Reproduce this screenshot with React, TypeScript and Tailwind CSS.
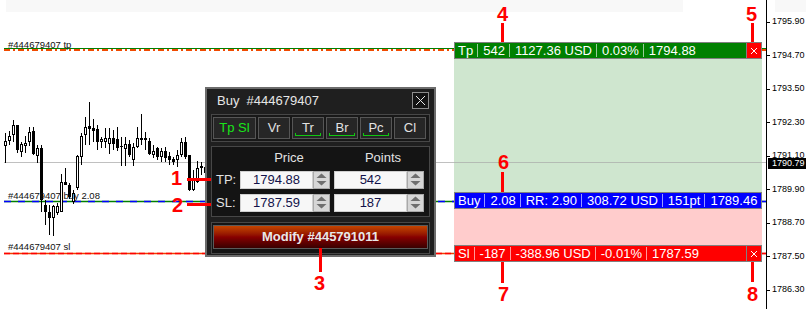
import React from "react";

type Candle = [number, number, number, number, number, number];

// x, high, low, bodyTop, bodyBottom, filled
const candles: Candle[] = [
  [5, 133, 163, 141, 146, 0],
  [9, 131, 145, 136, 141, 0],
  [13, 120, 142, 125, 135, 0],
  [17, 125, 153, 125, 150, 1],
  [21, 142, 157, 144, 152, 0],
  [25, 136, 153, 143, 146, 0],
  [29, 127, 146, 132, 142, 0],
  [33, 127, 155, 131, 154, 1],
  [37, 145, 163, 148, 156, 0],
  [41, 145, 212, 148, 200, 1],
  [45, 200, 225, 205, 212, 1],
  [49, 205, 235, 212, 218, 1],
  [53, 205, 236, 206, 218, 0],
  [57, 203, 215, 206, 213, 0],
  [61, 174, 212, 182, 212, 0],
  [65, 168, 185, 182, 185, 1],
  [69, 183, 199, 185, 197, 1],
  [73, 190, 204, 193, 202, 0],
  [77, 155, 190, 156, 188, 0],
  [81, 133, 165, 136, 157, 0],
  [85, 117, 145, 127, 135, 0],
  [89, 102, 145, 126, 129, 1],
  [93, 119, 142, 128, 131, 1],
  [97, 125, 150, 129, 142, 1],
  [101, 137, 148, 139, 142, 0],
  [105, 128, 148, 138, 142, 0],
  [109, 128, 154, 138, 144, 0],
  [113, 130, 150, 138, 144, 1],
  [117, 127, 151, 139, 148, 1],
  [121, 137, 166, 146, 147, 1],
  [125, 137, 166, 144, 149, 0],
  [129, 140, 157, 144, 155, 1],
  [133, 143, 166, 147, 160, 0],
  [137, 127, 148, 138, 147, 0],
  [141, 114, 145, 138, 140, 1],
  [145, 132, 150, 138, 140, 0],
  [149, 138, 155, 141, 154, 1],
  [153, 145, 158, 151, 155, 0],
  [157, 147, 160, 148, 157, 1],
  [161, 148, 162, 151, 157, 0],
  [165, 147, 162, 151, 158, 1],
  [169, 152, 165, 156, 160, 1],
  [173, 157, 165, 159, 162, 1],
  [177, 150, 167, 155, 160, 0],
  [181, 138, 157, 142, 155, 0],
  [185, 137, 159, 142, 157, 1],
  [189, 155, 191, 155, 190, 1],
  [193, 170, 191, 178, 190, 0],
  [197, 161, 183, 168, 182, 0],
  [201, 162, 175, 166, 168, 0],
  [205, 165, 178, 167, 173, 1],
];

const prices: [string, number][] = [
  ["1795.90", 21.5],
  ["1794.70", 55],
  ["1793.50", 88.5],
  ["1792.30", 122],
  ["1791.10", 155.5],
  ["1789.90", 189],
  ["1788.70", 222.5],
  ["1787.50", 256],
  ["1786.30", 289.5],
];

function Sep() {
  return <span className="ml-[4px] mr-[5px] w-px h-[13px] bg-white/60" />;
}

function BarLine({ items }: { items: string[] }) {
  return (
    <div className="flex-1 flex items-center pl-[3px] whitespace-pre">
      {items.map((t, i) => (
        <React.Fragment key={i}>
          {i > 0 && <Sep />}
          <span>{t}</span>
        </React.Fragment>
      ))}
    </div>
  );
}

function SmallX() {
  return (
    <svg width="8" height="8" viewBox="0 0 8 8">
      <path d="M1 1L7 7M7 1L1 7" stroke="#fff" strokeWidth="1" />
    </svg>
  );
}

function Spinner() {
  return (
    <div className="w-[17px] h-full bg-[#d6d6d6] border border-[#a9a9a9]">
      <svg width="15" height="16" viewBox="0 0 15 16">
        <path d="M2.5 6L7.5 1.5L12.5 6Z" fill="#6e6e6e" />
        <path d="M2.5 9L7.5 13.5L12.5 9Z" fill="#6e6e6e" />
      </svg>
    </div>
  );
}

function Field({ value }: { value: string }) {
  return (
    <div className="w-[90px] flex h-full">
      <div className="w-[73px] bg-[#f7f7f7] border border-[#cfcfcf] flex items-center justify-center text-[13px] text-[#12124a]">
        {value}
      </div>
      <Spinner />
    </div>
  );
}

function PanelButton({ label, active, marked }: { label: string; active?: boolean; marked?: boolean }) {
  return (
    <div
      className={`relative h-[22px] border border-[#565656] bg-[#262626] flex items-center justify-center text-[13px] ${
        active ? "w-[43px] text-[#19e619]" : "w-[32px] text-[#e2e2e2]"
      }`}
    >
      {label}
      {marked && (
        <span className="absolute left-[2px] right-[2px] bottom-[2px] h-[3px] border-x border-b border-[#11c811]" />
      )}
    </div>
  );
}

function Num({ n, x, y }: { n: string; x: number; y: number }) {
  return (
    <div
      className="absolute text-[20px] leading-[20px] font-bold text-[#ff0000]"
      style={{ left: x, top: y }}
    >
      {n}
    </div>
  );
}

export default function App() {
  return (
    <div className="relative w-[806px] h-[309px] bg-white overflow-hidden font-['Liberation_Sans',Arial,sans-serif]">
      <div className="absolute left-[6px] top-0 w-[677px] h-[12px] bg-[#f8f8f8]" />
      <div className="absolute left-[775px] top-0 w-[31px] h-[12px] bg-[#f8f8f8]" />

      <svg className="absolute inset-0" width="806" height="309" viewBox="0 0 806 309">
        {/* bid line */}
        <line x1="4" y1="162.5" x2="766" y2="162.5" stroke="#c0c0c0" strokeWidth="1" />
        {/* tp line */}
        <line x1="4" y1="48.5" x2="766" y2="48.5" stroke="#008000" strokeWidth="1" />
        <line x1="4" y1="50" x2="766" y2="50" stroke="#f04a00" strokeWidth="2" strokeDasharray="6 3 2 3" />
        {/* open line */}
        <line x1="4" y1="201.5" x2="766" y2="201.5" stroke="#008000" strokeWidth="1.5" />
        <line x1="4" y1="201.5" x2="766" y2="201.5" stroke="#0000ff" strokeWidth="1.5" strokeDasharray="7 7" />
        {/* sl line */}
        <line x1="4" y1="253.5" x2="766" y2="253.5" stroke="#f04000" strokeWidth="1.5" />
        <line x1="4" y1="253.5" x2="766" y2="253.5" stroke="#ff0000" strokeWidth="1.5" strokeDasharray="6 3" />

        {candles.map(([x, hi, lo, top, bot, f]) => (
          <g key={x}>
            <rect x={x} y={hi} width={1} height={lo - hi} fill="#000" />
            <rect x={x - 1} y={top} width={3} height={Math.max(bot - top, 1)} fill="#000" />
            {!f && bot - top > 2 && <rect x={x} y={top + 1} width={1} height={bot - top - 2} fill="#fff" />}
          </g>
        ))}

        {/* price axis */}
        <line x1="766.5" y1="0" x2="766.5" y2="309" stroke="#000" strokeWidth="1" />
        {prices.map(([p, y]) => (
          <line key={p} x1="767" y1={Math.round(y) + 0.5} x2="770" y2={Math.round(y) + 0.5} stroke="#000" strokeWidth="1" />
        ))}
      </svg>

      {/* line labels */}
      <div className="absolute left-[8px] top-[39px] text-[9.5px] leading-[11px] text-[#111]">#444679407 tp</div>
      <div className="absolute left-[8px] top-[190px] text-[9.5px] leading-[11px] text-[#111]">#444679407 buy 2.08</div>
      <div className="absolute left-[8px] top-[241px] text-[9.5px] leading-[11px] text-[#111]">#444679407 sl</div>

      {/* trade zones */}
      <div className="absolute left-[454px] top-[42px] w-[308px] flex flex-col text-white text-[13px] leading-[15px]">
        <div className="h-[17px] flex border border-[#808080] bg-[#008000]">
          <BarLine items={["Tp", "542", "1127.36 USD", "0.03%", "1794.88"]} />
          <div className="w-[15px] bg-[#ff0000] border-l border-[#808080] flex items-center justify-center">
            <SmallX />
          </div>
        </div>
        <div className="h-[133px] bg-[#cfe6cf]" />
        <div className="h-[17px] flex border border-[#808080] bg-[#0000ff]">
          <BarLine items={["Buy", "2.08", "RR: 2.90", "308.72 USD", "151pt", "1789.46"]} />
        </div>
        <div className="h-[36px] bg-[#ffcccc]" />
        <div className="h-[17px] flex border border-[#808080] bg-[#ff0000]">
          <BarLine items={["Sl", "-187", "-388.96 USD", "-0.01%", "1787.59"]} />
          <div className="w-[15px] bg-[#ff0000] border-l border-[#808080] flex items-center justify-center">
            <SmallX />
          </div>
        </div>
      </div>
      <div className="absolute left-[454px] top-[162px] w-[308px] h-px bg-[#b4bcb4]" />

      {/* price labels */}
      {prices.map(([p, y]) => (
        <div
          key={p}
          className="absolute left-[772px] text-[9px] leading-[11px] text-black"
          style={{ top: y - 5.5 }}
        >
          {p}
        </div>
      ))}
      <div className="absolute left-[768px] top-[158px] w-[38px] h-[11px] bg-black text-white text-[9px] leading-[11px] pl-[4px]">
        1790.79
      </div>

      {/* order panel */}
      <div className="absolute left-[205px] top-[87px] w-[231px] h-[170px] border-2 border-[#6c6c6c] bg-[#1f1f1f] flex flex-col">
        <div className="h-[23px] flex items-center justify-between pl-[10px] pr-[5px]">
          <span className="text-[13px] text-[#e6e6e6] whitespace-pre">Buy  #444679407</span>
          <div className="w-[17px] h-[17px] border border-[#8c8c8c] bg-[#141414] flex items-center justify-center">
            <svg width="11" height="11" viewBox="0 0 11 11">
              <path d="M1 1L10 10M10 1L1 10" stroke="#e8e8e8" strokeWidth="1" />
            </svg>
          </div>
        </div>

        <div className="mt-[2px] mx-[4px] h-[28px] border border-[#474747] bg-[#181818] flex gap-[2px] pl-[1px] pt-[2px]">
          <PanelButton label="Tp Sl" active />
          <PanelButton label="Vr" />
          <PanelButton label="Tr" marked />
          <PanelButton label="Br" marked />
          <PanelButton label="Pc" marked />
          <PanelButton label="Cl" />
        </div>

        <div className="mt-[4px] mx-[4px] h-[71px] border border-[#474747] bg-[#141414] flex flex-col text-[13px] text-[#e2e2e2]">
          <div className="h-[22px] flex items-center">
            <div className="w-[28px]" />
            <div className="w-[90px] pl-[8px] text-center">Price</div>
            <div className="w-[4px]" />
            <div className="w-[90px] pl-[8px] text-center">Points</div>
          </div>
          <div className="mt-[2px] h-[18px] flex items-center">
            <div className="w-[28px] pl-[4px]">TP:</div>
            <Field value="1794.88" />
            <div className="w-[4px]" />
            <Field value="542" />
          </div>
          <div className="mt-[5px] h-[18px] flex items-center">
            <div className="w-[28px] pl-[4px]">SL:</div>
            <Field value="1787.59" />
            <div className="w-[4px]" />
            <Field value="187" />
          </div>
        </div>

        <div className="mt-[5px] mx-[4px] h-[32px] border border-[#474747] bg-[#141414] px-[1px] pt-[2px]">
          <div className="h-[24px] border border-[#5a5a5a] bg-linear-to-b from-[#c44400] via-[#880000] to-[#3a0000] flex items-center justify-center text-[13px] font-bold text-[#e8e8e8]">
            Modify #445791011
          </div>
        </div>
      </div>

      {/* annotations */}
      <div className="absolute left-[187px] top-[178px] w-[24px] h-[3px] bg-[#ff0000]" />
      <div className="absolute left-[187px] top-[203px] w-[24px] h-[3px] bg-[#ff0000]" />
      <div className="absolute left-[319px] top-[248px] w-[3px] h-[24px] bg-[#ff0000]" />
      <div className="absolute left-[501px] top-[23px] w-[3px] h-[19px] bg-[#ff0000]" />
      <div className="absolute left-[751px] top-[23px] w-[3px] h-[19px] bg-[#ff0000]" />
      <div className="absolute left-[501px] top-[172px] w-[3px] h-[20px] bg-[#ff0000]" />
      <div className="absolute left-[501px] top-[262px] w-[3px] h-[21px] bg-[#ff0000]" />
      <div className="absolute left-[751px] top-[262px] w-[3px] h-[20px] bg-[#ff0000]" />

      <Num n="1" x={171} y={168} />
      <Num n="2" x={172} y={195} />
      <Num n="3" x={314} y={273} />
      <Num n="4" x={497} y={4} />
      <Num n="5" x={746} y={4} />
      <Num n="6" x={498} y={152} />
      <Num n="7" x={498} y={284} />
      <Num n="8" x={747} y={284} />
    </div>
  );
}
